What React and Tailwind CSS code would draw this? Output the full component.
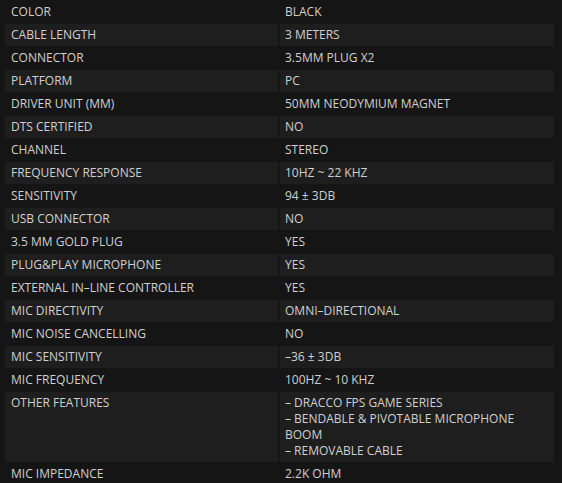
import React from "react";

const specs = [
  ["COLOR", ["BLACK"]],
  ["CABLE LENGTH", ["3 METERS"]],
  ["CONNECTOR", ["3.5MM PLUG X2"]],
  ["PLATFORM", ["PC"]],
  ["DRIVER UNIT (MM)", ["50MM NEODYMIUM MAGNET"]],
  ["DTS CERTIFIED", ["NO"]],
  ["CHANNEL", ["STEREO"]],
  ["FREQUENCY RESPONSE", ["10HZ ~ 22 KHZ"]],
  ["SENSITIVITY", ["94 ± 3DB"]],
  ["USB CONNECTOR", ["NO"]],
  ["3.5 MM GOLD PLUG", ["YES"]],
  ["PLUG&PLAY MICROPHONE", ["YES"]],
  ["EXTERNAL IN–LINE CONTROLLER", ["YES"]],
  ["MIC DIRECTIVITY", ["OMNI–DIRECTIONAL"]],
  ["MIC NOISE CANCELLING", ["NO"]],
  ["MIC SENSITIVITY", ["–36 ± 3DB"]],
  ["MIC FREQUENCY", ["100HZ ~ 10 KHZ"]],
  [
    "OTHER FEATURES",
    [
      "– DRACCO FPS GAME SERIES",
      "– BENDABLE & PIVOTABLE MICROPHONE BOOM",
      "– REMOVABLE CABLE",
    ],
  ],
  ["MIC IMPEDANCE", ["2.2K OHM"]],
];

export default function App() {
  return (
    <div className="w-[562px] h-[483px] overflow-hidden bg-[#151515] text-[#d0d0d0] text-[12px] leading-4 font-['Open_Sans',sans-serif]">
      <div className="flex flex-col gap-px pl-[5px] pt-px w-[554px]">
        {specs.map(([label, values], i) => {
          const bg = i % 2 === 1 ? "bg-[#1e1e1e]" : "bg-transparent";
          return (
            <div key={label} className="flex gap-[2px]">
              <div className={`w-[273px] shrink-0 px-[6px] py-[3px] ${bg}`}>{label}</div>
              <div className={`flex-1 px-[5px] py-[3px] ${bg}`}>
                {values.map((v) => (
                  <div key={v}>{v}</div>
                ))}
              </div>
            </div>
          );
        })}
      </div>
    </div>
  );
}
